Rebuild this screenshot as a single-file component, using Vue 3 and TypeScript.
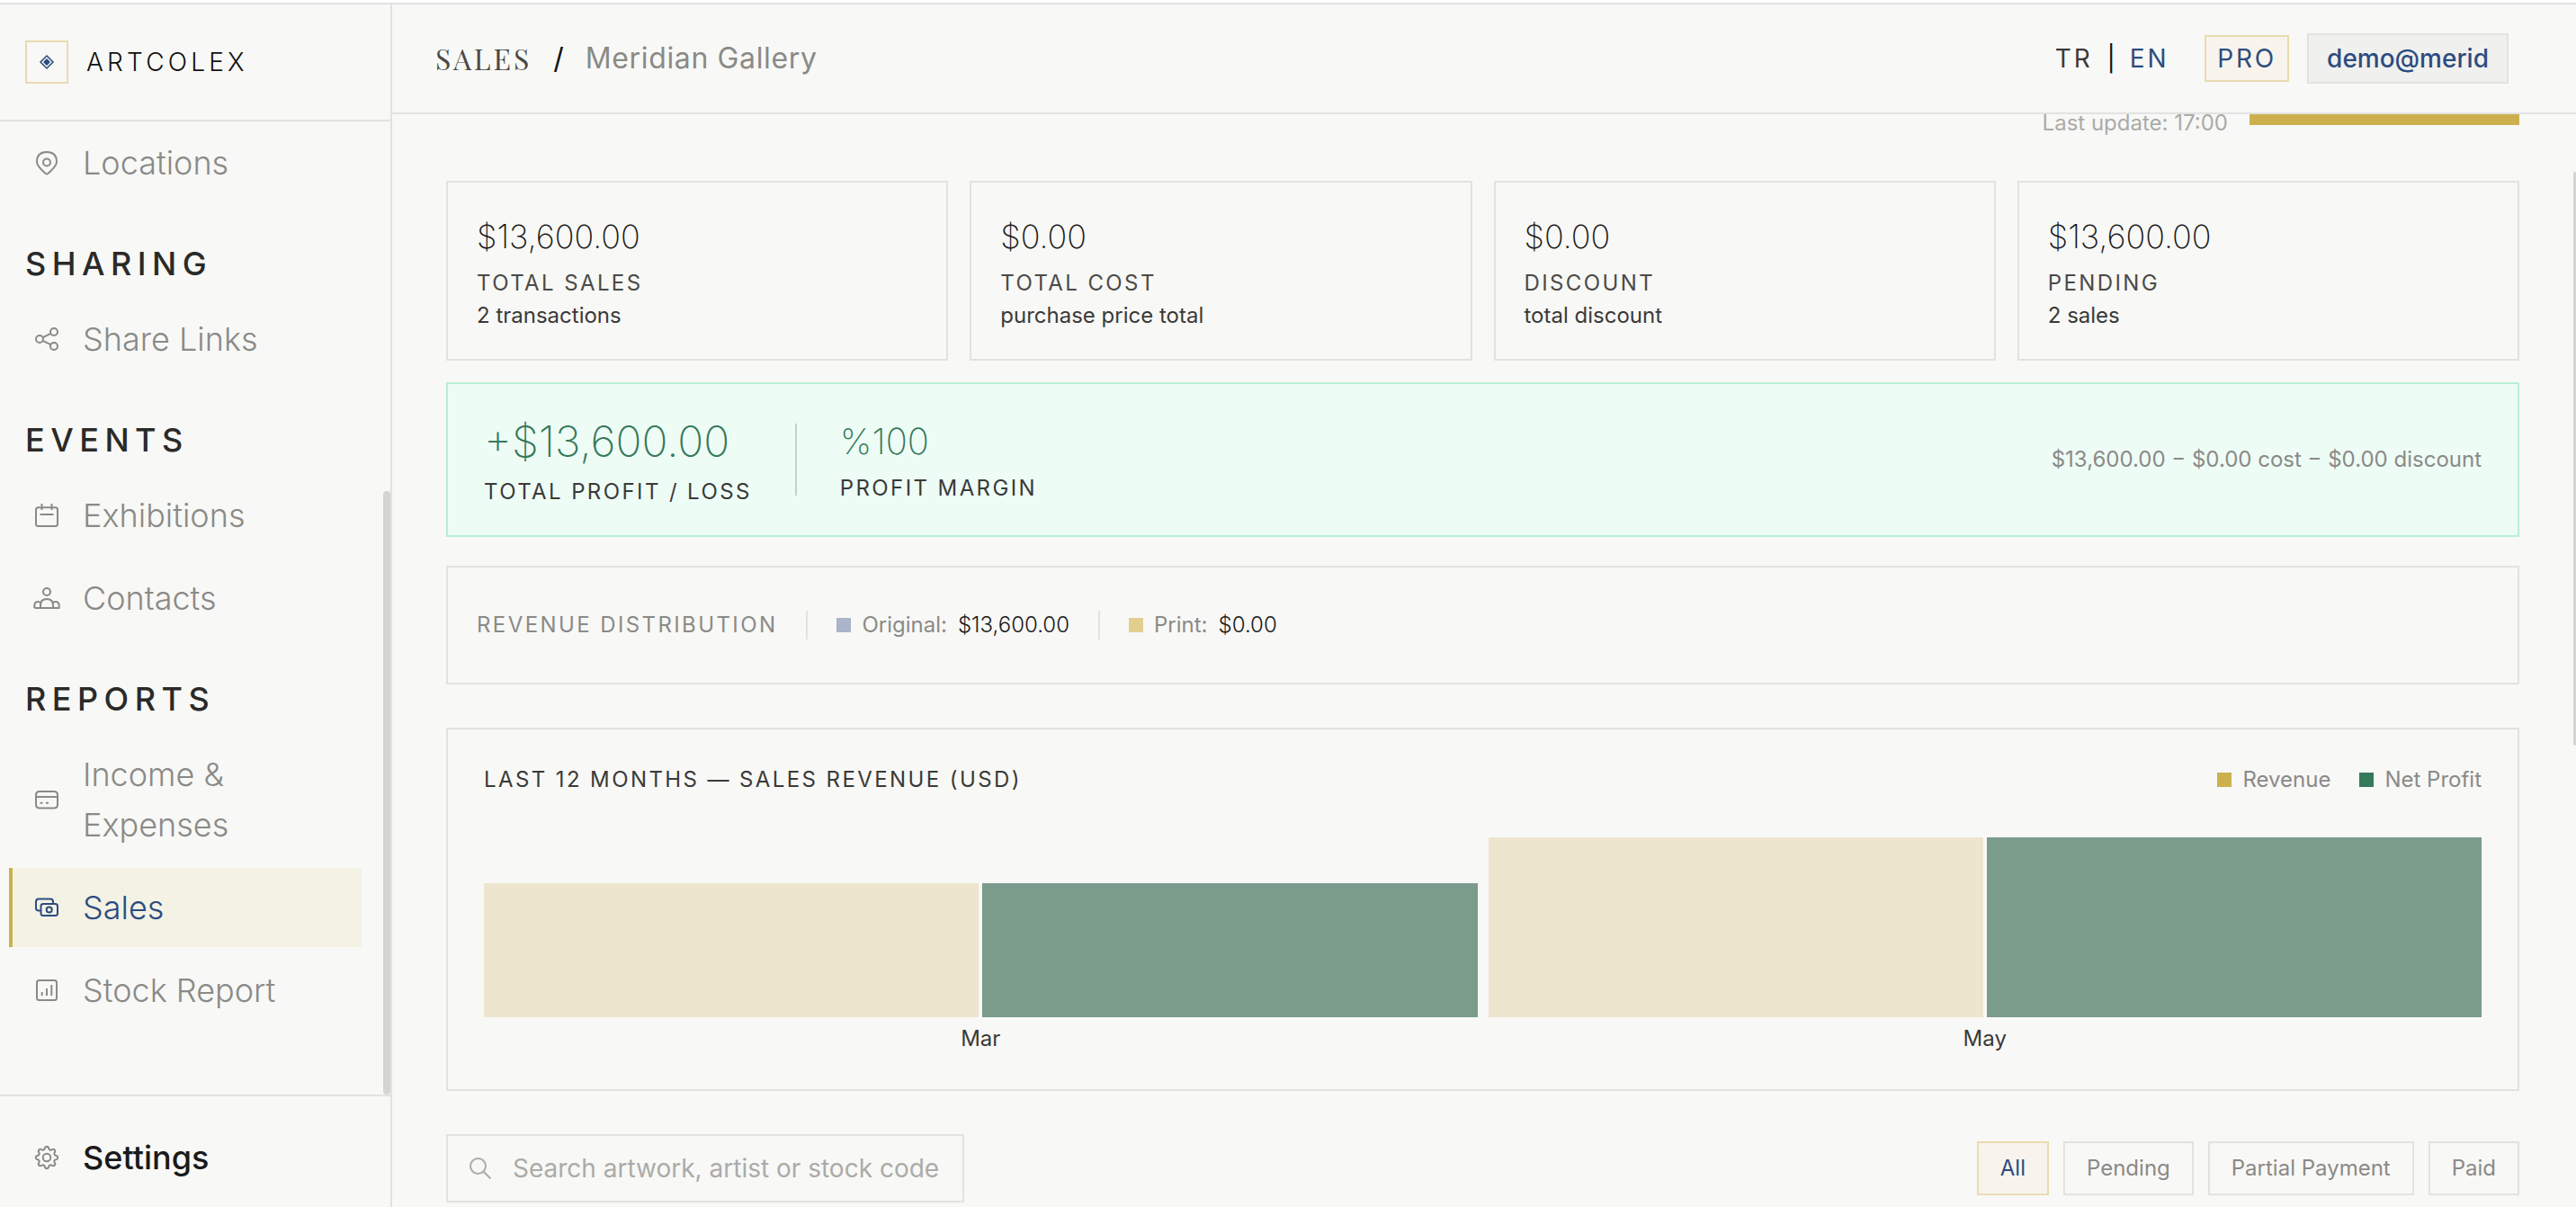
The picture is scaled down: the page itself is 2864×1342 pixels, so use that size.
<script setup lang="ts">
interface NavItem {
  label: string
  icon: string
  active?: boolean
}
interface NavSection {
  title: string
  items: NavItem[]
}

// Outline of the cog: a circle whose radius swells eight times per turn
const cog = (() => {
  const points: string[] = []
  for (let i = 0; i < 96; i++) {
    const angle = (i / 96) * Math.PI * 2
    const wave = Math.cos(8 * angle)
    const radius = 10.7 + 1.5 * Math.sign(wave) * Math.sqrt(Math.abs(wave))
    points.push(`${(16 + radius * Math.cos(angle)).toFixed(2)} ${(16 + radius * Math.sin(angle)).toFixed(2)}`)
  }
  return `M${points.join('L')}Z`
})()

const icons: Record<string, string> = {
  pin: 'M5 15C5 8 9 4 16 4S27 8 27 15C27 20.500 20 25 17.200 28Q16 29 14.800 28C12 25 5 20.500 5 15ZM12 15.500a4 4 0 1 0 8 0a4 4 0 1 0 -8 0',
  share: 'M4 16a4 4 0 1 0 8 0a4 4 0 1 0 -8 0M20 8a4 4 0 1 0 8 0a4 4 0 1 0 -8 0M20 24a4 4 0 1 0 8 0a4 4 0 1 0 -8 0M11.600 14.200L20.400 9.800M11.600 17.800L20.400 22.200',
  calendar: 'M6.500 7.300H25.500Q28 7.300 28 9.800V25.500Q28 28 25.500 28H6.500Q4 28 4 25.500V9.800Q4 7.300 6.500 7.300ZM10.500 3V10M21.500 3V10M8.500 15H23.500',
  people: 'M12 9a4 4 0 1 0 8 0a4 4 0 1 0 -8 0M2.300 27H29.700V24.500Q29.700 20 25.700 20Q23.600 20 22.600 21.500M2.300 27V24.500Q2.300 20 6.300 20Q8.400 20 9.400 21.500M9 27V24Q9 17 16 17T23 24V27',
  card: 'M8 7H24Q28 7 28 11V21.500Q28 25.500 24 25.500H8Q4 25.500 4 21.500V11Q4 7 8 7ZM4 13H28M8.500 19.700H11.500M15 19.700H18',
  cash: 'M9 19.500H7Q4 19.500 4 16.500V9.500Q4 6.500 7 6.500H20Q23 6.500 23 9.500V12M12 12H25.500Q28 12 28 14.500V22.500Q28 25 25.500 25H12Q9.500 25 9.500 22.500V14.500Q9.500 12 12 12ZM15.700 18.500a3 3 0 1 0 6 0a3 3 0 1 0 -6 0',
  chart: 'M7.500 5H24.500Q27 5 27 7.500V24.500Q27 27 24.500 27H7.500Q5 27 5 24.500V7.500Q5 5 7.500 5ZM10.700 18V22M16 14V22M21.300 10V22',
}

const sections: NavSection[] = [
  { title: '', items: [{ label: 'Locations', icon: 'pin' }] },
  { title: 'Sharing', items: [{ label: 'Share Links', icon: 'share' }] },
  {
    title: 'Events',
    items: [
      { label: 'Exhibitions', icon: 'calendar' },
      { label: 'Contacts', icon: 'people' },
    ],
  },
  {
    title: 'Reports',
    items: [
      { label: 'Income & Expenses', icon: 'card' },
      { label: 'Sales', icon: 'cash', active: true },
      { label: 'Stock Report', icon: 'chart' },
    ],
  },
]

const stats = [
  { value: '$13,600.00', label: 'Total Sales', note: '2 transactions' },
  { value: '$0.00', label: 'Total Cost', note: 'purchase price total' },
  { value: '$0.00', label: 'Discount', note: 'total discount' },
  { value: '$13,600.00', label: 'Pending', note: '2 sales' },
]

const distribution = [
  { name: 'Original:', value: '$13,600.00', tone: 'blue' },
  { name: 'Print:', value: '$0.00', tone: 'sand' },
]

const months = [
  { name: 'Mar', height: 149 },
  { name: 'May', height: 200 },
]

const filters = ['All', 'Pending', 'Partial Payment', 'Paid']
</script>

<template>
  <div class="app">
    <aside class="sidebar">
      <div class="brand">
        <span class="logo">
          <svg width="18" height="18" viewBox="0 0 18 18" aria-hidden="true">
            <path d="M9 2L16 9L9 16L2 9Z" fill="none" stroke="currentColor" stroke-width="1.500" />
            <path d="M9 5L13 9L9 13L5 9Z" fill="currentColor" />
          </svg>
        </span>
        <span class="brand-name">ARTCOLEX</span>
      </div>
      <nav class="nav">
        <section v-for="section in sections" :key="section.title" class="nav-section">
          <h2 v-if="section.title">{{ section.title }}</h2>
          <a
            v-for="item in section.items"
            :key="item.label"
            href="#"
            class="nav-item"
            :class="{ active: item.active }"
          >
            <svg class="icon" viewBox="0 0 32 32" aria-hidden="true"><path :d="icons[item.icon]" /></svg>
            <span>{{ item.label }}</span>
          </a>
        </section>
        <div class="nav-thumb"></div>
      </nav>
      <div class="sidebar-foot">
        <a href="#" class="nav-item settings">
          <svg class="icon" viewBox="0 0 32 32" aria-hidden="true">
            <path :d="cog" />
            <circle cx="16" cy="16" r="4.300" />
          </svg>
          <span>Settings</span>
        </a>
      </div>
    </aside>

    <div class="body">
      <header class="topbar">
        <div class="crumbs">
          <h1>SALES</h1>
          <span class="slash">/</span>
          <span class="gallery">Meridian Gallery</span>
        </div>
        <div class="account">
          <div class="langs">
            <button type="button">TR</button>
            <span class="pipe">|</span>
            <button type="button" class="current">EN</button>
          </div>
          <span class="plan">PRO</span>
          <button type="button" class="user">demo@merid</button>
        </div>
      </header>

      <div class="scroller">
        <main class="content">
          <div class="head">
            <span>Last update: 17:00</span>
            <button type="button" class="primary" aria-label="New sale"></button>
          </div>

          <div class="stats">
            <article v-for="stat in stats" :key="stat.label" class="stat">
              <div class="stat-value">{{ stat.value }}</div>
              <div class="stat-label">{{ stat.label }}</div>
              <div class="stat-note">{{ stat.note }}</div>
            </article>
          </div>

          <section class="profit">
            <div class="profit-item">
              <div class="profit-value">+$13,600.00</div>
              <div class="profit-label">Total Profit / Loss</div>
            </div>
            <span class="profit-rule"></span>
            <div class="profit-item">
              <div class="margin-value">%100</div>
              <div class="profit-label">Profit Margin</div>
            </div>
            <div class="formula">$13,600.00 − $0.00 cost − $0.00 discount</div>
          </section>

          <section class="distribution">
            <span class="dist-title">Revenue Distribution</span>
            <template v-for="part in distribution" :key="part.name">
              <span class="dist-rule"></span>
              <span class="dist-part">
                <i class="swatch" :class="part.tone"></i>
                <span>{{ part.name }}</span>
                <b>{{ part.value }}</b>
              </span>
            </template>
          </section>

          <section class="chart">
            <div class="chart-head">
              <h2>Last 12 Months — Sales Revenue (USD)</h2>
              <div class="legend">
                <span><i class="swatch gold"></i>Revenue</span>
                <span><i class="swatch green"></i>Net Profit</span>
              </div>
            </div>
            <div class="months">
              <div v-for="month in months" :key="month.name" class="month">
                <div class="bars">
                  <div class="bar revenue" :style="{ height: month.height + 'px' }"></div>
                  <div class="bar net" :style="{ height: month.height + 'px' }"></div>
                </div>
                <div class="month-name">{{ month.name }}</div>
              </div>
            </div>
          </section>

          <div class="tools">
            <label class="search">
              <svg width="24" height="24" viewBox="0 0 24 24" aria-hidden="true">
                <circle cx="9.500" cy="9.500" r="8.500" />
                <path d="M15.500 15.500L23.500 23.500" />
              </svg>
              <input type="text" placeholder="Search artwork, artist or stock code" aria-label="Search sales" />
            </label>
            <div class="filters">
              <button v-for="(name, i) in filters" :key="name" type="button" :class="{ on: i === 0 }">{{ name }}</button>
            </div>
          </div>
        </main>
        <div class="track"><div class="thumb"></div></div>
      </div>
    </div>
  </div>
</template>

<style>
body {
  background: #ffffff;
}
</style>

<style scoped>
.app {
  display: flex;
  box-sizing: border-box;
  height: calc(100vh - 3px);
  margin-top: 3px;
  overflow: hidden;
  border-top: 2px solid #e2e2e0;
  background: #f8f8f6;
  color: #3a3a38;
  font-family: Inter, "Liberation Sans", sans-serif;
  font-size: 24px;
  line-height: 32px;
}
.app *,
.app *::before {
  box-sizing: border-box;
}
button {
  font: inherit;
  margin: 0;
  padding: 0;
  border: 0;
  background: none;
  color: inherit;
}
h1,
h2 {
  margin: 0;
  font-weight: 400;
}
svg {
  display: block;
  flex: none;
}

/* Sidebar */
.sidebar {
  display: flex;
  flex: none;
  flex-direction: column;
  width: 436px;
  border-right: 2px solid #e2e2e0;
}
.brand {
  display: flex;
  flex: none;
  align-items: center;
  gap: 20px;
  height: 130px;
  padding: 0 28px;
  border-bottom: 2px solid #e2e2e0;
}
.logo {
  display: flex;
  align-items: center;
  justify-content: center;
  width: 48px;
  height: 48px;
  border: 2px solid #e8dbb0;
  color: #2b4c7e;
}
.brand-name {
  color: #111111;
  font-size: 28px;
  font-weight: 300;
  letter-spacing: 0.15em;
}
.nav {
  position: relative;
  flex: 1;
  min-height: 0;
  overflow: hidden;
  padding: 2px 32px 0 10px;
}
.nav-section h2 {
  padding: 36px 18px 12px;
  color: #2a2a28;
  font-size: 36px;
  font-weight: 500;
  line-height: 56px;
  letter-spacing: 0.18em;
  text-transform: uppercase;
}
.nav-item {
  display: flex;
  align-items: center;
  gap: 24px;
  margin-bottom: 4px;
  padding: 16px 22px;
  border-left: 4px solid transparent;
  color: #8a8a87;
  font-size: 36px;
  font-weight: 300;
  line-height: 56px;
  text-decoration: none;
}
.nav-item.active {
  border-left-color: #cdb04e;
  background: #f4f2e5;
  color: #2c4c80;
}
.icon {
  width: 32px;
  height: 32px;
  fill: none;
  stroke: currentColor;
  stroke-width: 2px;
  stroke-linecap: butt;
  stroke-linejoin: round;
}
.nav-thumb {
  position: absolute;
  right: 0;
  bottom: 0;
  width: 8px;
  height: 62%;
  border-radius: 4px;
  background: #d4d4d2;
}
.sidebar-foot {
  flex: none;
  height: 125px;
  padding: 24px 32px 0 10px;
  border-top: 2px solid #e2e2e0;
}
.settings span {
  color: #1a1a1a;
  font-weight: 500;
}

/* Top bar */
.body {
  display: flex;
  flex: 1;
  flex-direction: column;
  min-width: 0;
}
.topbar {
  display: flex;
  flex: none;
  align-items: center;
  justify-content: space-between;
  height: 122px;
  padding: 0 75px 0 48px;
  border-bottom: 2px solid #e2e2e0;
}
.crumbs {
  display: flex;
  align-items: center;
  gap: 24px;
  font-size: 32px;
  line-height: 40px;
}
.crumbs h1 {
  color: #4a4a48;
  font-family: "Playfair Display", "Liberation Serif", serif;
  font-size: 32px;
  letter-spacing: 3px;
}
.slash {
  color: #111111;
}
.gallery {
  color: #8a8a87;
  letter-spacing: 0.02em;
}
.account {
  display: flex;
  align-items: center;
  font-size: 28px;
}
.langs {
  display: flex;
  align-items: center;
  gap: 16px;
  margin-right: 40px;
}
.langs button {
  color: #3a3a38;
  letter-spacing: 0.1em;
}
.langs .current {
  color: #2c4c80;
}
.pipe {
  color: #111111;
}
.plan {
  margin-right: 20px;
  padding: 8px 12px;
  border: 2px solid #e8dbb0;
  background: #f8f4ed;
  color: #2c4c80;
  letter-spacing: 0.1em;
}
.user {
  height: 56px;
  padding: 0 20px;
  border: 2px solid #e2e2e0;
  background: #f0f0ee;
  color: #2c4c80;
  font-weight: 500;
}

/* Content */
.scroller {
  display: flex;
  flex: 1;
  min-height: 0;
}
.content {
  flex: 1;
  min-width: 0;
  padding: 0 60px;
}
.track {
  flex: none;
  width: 3px;
  padding-top: 64px;
}
.thumb {
  height: 638px;
  border-radius: 4px 0 0 4px;
  background: #d4d4d2;
}
.head {
  display: flex;
  align-items: flex-start;
  justify-content: flex-end;
  gap: 24px;
  height: 74px;
  color: #ababa8;
  line-height: 20px;
}
.primary {
  width: 300px;
  height: 12px;
  background: #cdb04e;
}
.stats {
  display: grid;
  grid-template-columns: repeat(4, 1fr);
  gap: 24px;
}
.stat {
  height: 200px;
  padding: 36px 32px 0;
  border: 2px solid #e2e2e0;
}
.stat-value {
  margin-bottom: 12px;
  color: #1a1a1a;
  font-size: 36px;
  font-weight: 200;
  line-height: 48px;
}
.stat-label {
  color: #4a4a48;
  letter-spacing: 0.1em;
  text-transform: uppercase;
}
.stat-note {
  margin-top: 4px;
}
.profit {
  display: flex;
  align-items: center;
  gap: 48px;
  height: 172px;
  margin-top: 24px;
  padding: 0 40px;
  border: 2px solid #b8efd2;
  background: #eefcf6;
}
.profit-value,
.margin-value {
  margin-bottom: 8px;
  color: #357a5b;
  font-size: 48px;
  font-weight: 200;
  line-height: 64px;
}
.margin-value {
  font-size: 40px;
  line-height: 56px;
}
.profit-label {
  letter-spacing: 0.1em;
  text-transform: uppercase;
}
.profit-rule {
  width: 2px;
  height: 80px;
  background: #c4d2cb;
}
.formula {
  margin-left: auto;
  color: #8a8a87;
}
.distribution {
  display: flex;
  align-items: center;
  gap: 32px;
  height: 132px;
  margin-top: 32px;
  padding: 0 32px;
  border: 2px solid #e2e2e0;
  color: #8a8a87;
}
.dist-title {
  letter-spacing: 0.1em;
  text-transform: uppercase;
}
.dist-rule {
  width: 2px;
  height: 32px;
  background: #e2e2e0;
}
.dist-part {
  display: flex;
  align-items: center;
  gap: 12px;
}
.dist-part b {
  color: #1a1a1a;
  font-weight: 300;
}
.swatch {
  flex: none;
  width: 16px;
  height: 16px;
}
.blue {
  background: #aab4ca;
}
.sand {
  background: #e1cf90;
}
.gold {
  background: #cdb04e;
}
.green {
  background: #357a5b;
}
.chart {
  height: 404px;
  margin-top: 48px;
  padding: 40px;
  border: 2px solid #e2e2e0;
}
.chart-head {
  display: flex;
  align-items: center;
  justify-content: space-between;
  margin-bottom: 48px;
}
.chart-head h2 {
  font-size: 24px;
  letter-spacing: 0.1em;
  text-transform: uppercase;
}
.legend {
  display: flex;
  gap: 32px;
  color: #8a8a87;
}
.legend span {
  display: flex;
  align-items: center;
  gap: 12px;
}
.months {
  display: flex;
  gap: 12px;
}
.month {
  flex: 1;
}
.bars {
  display: flex;
  align-items: flex-end;
  gap: 4px;
  height: 200px;
}
.bar {
  flex: 1;
}
.revenue {
  background: #ede5cd;
}
.net {
  background: #7b9b8b;
}
.month-name {
  margin-top: 8px;
  text-align: center;
}
.tools {
  display: flex;
  align-items: center;
  justify-content: space-between;
  margin-top: 48px;
}
.search {
  display: flex;
  align-items: center;
  gap: 24px;
  width: 576px;
  height: 76px;
  padding: 0 24px;
  border: 2px solid #e2e2e0;
  color: #ababa8;
}
.search svg {
  fill: none;
  stroke: currentColor;
  stroke-width: 2px;
}
.search input {
  flex: 1;
  min-width: 0;
  padding: 0;
  border: 0;
  outline: 0;
  background: none;
  color: #3a3a38;
  font: inherit;
  font-size: 28px;
}
.search input::placeholder {
  color: #ababa8;
  opacity: 1;
}
.filters {
  display: flex;
  gap: 16px;
}
.filters button {
  height: 60px;
  padding: 0 24px;
  border: 2px solid #e2e2e0;
  color: #8a8a87;
}
.filters .on {
  border-color: #e8dbb0;
  background: #f8f4ed;
  color: #2c4c80;
}
</style>
